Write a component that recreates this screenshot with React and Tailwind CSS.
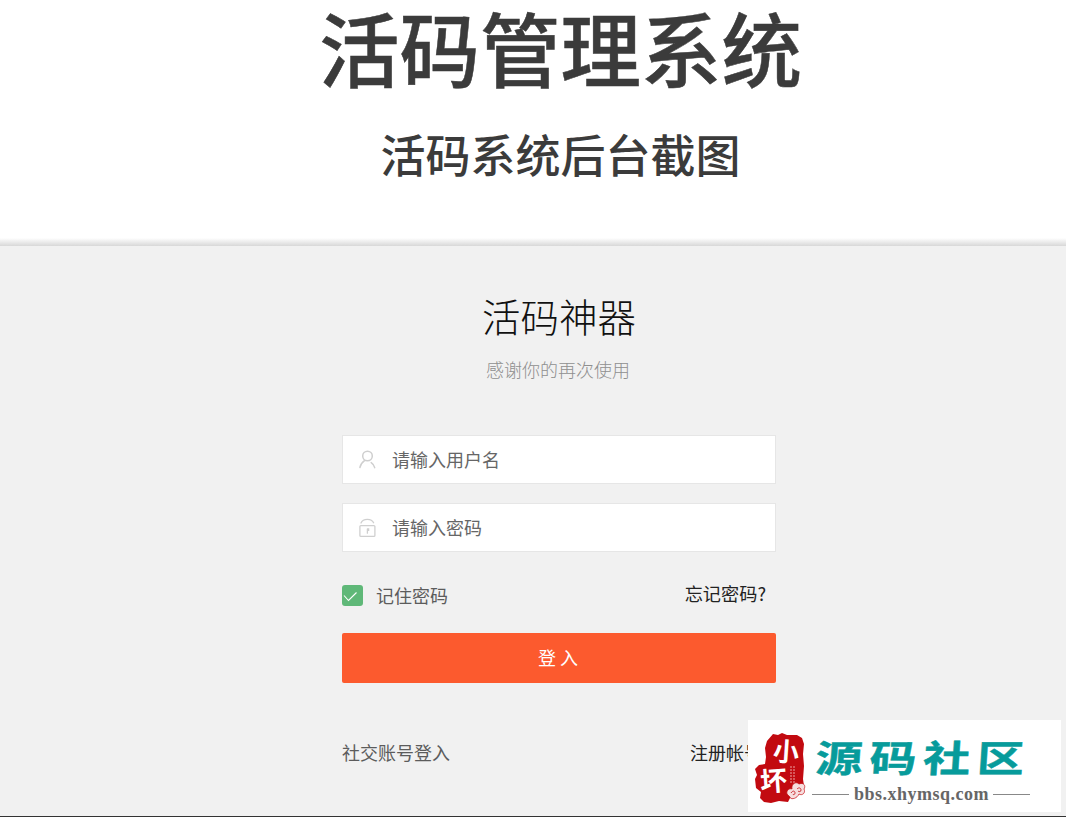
import { useState } from 'react';

function UserIcon() {
  return (
    <svg width="18" height="20" viewBox="0 0 18 20" fill="none" stroke="#cfcfcf" strokeWidth="1.5" strokeLinecap="round">
      <circle cx="8.5" cy="6" r="4.8" />
      <path d="M5.5 10.6C3.3 12.2 1.5 14.5 .9 17.5M12.2 12.6C14 13.8 15.2 15.5 15.7 17.7" />
    </svg>
  );
}

function LockIcon() {
  return (
    <svg width="18" height="20" viewBox="0 0 18 20" fill="none" stroke="#cfcfcf" strokeWidth="1.3" strokeLinecap="round">
      <rect x=".9" y="7.6" width="15" height="10.8" rx="1" />
      <path d="M2 5C3 2.6 5.4 1.3 8.4 1.3s5.2 1.2 6.2 3.4M8.4 11v4.2M8.4 11h1.2v1.4H8.4" />
    </svg>
  );
}

function Field({ icon, type, placeholder }) {
  return (
    <label className="flex h-[49px] items-center border border-[#e6e6e6] bg-white pl-4">
      {icon}
      <input
        type={type}
        placeholder={placeholder}
        className="mb-[2px] ml-[15px] min-w-0 flex-1 bg-transparent text-[18px] leading-6 outline-none placeholder:text-[#666]"
      />
    </label>
  );
}

function Seal() {
  return (
    <svg width="52" height="72" viewBox="0 0 52 72">
      <path
        d="M19 2L24 3 28 1 33 3 43 3 48 6 50 12 49 22 50 34 49 47 50 54 47 61 41 64 36 66 34 70 25 69 17 71 10 70 6 66 7 60 2 56 1 47 3 43 1 37 5 33 11 32 12 25 11 16 13 9Z"
        fill="#c20a10"
      />
      <text x="19" y="29" fontSize="26" fontWeight="700" fill="#fff" transform="rotate(4 30 20)">小</text>
      <text x="6" y="59" fontSize="27" fontWeight="700" fill="#fff" transform="rotate(-4 18 50)">坏</text>
      <path d="M37 34v17M40 34v17" stroke="#e58a8a" strokeWidth="1.2" strokeDasharray="2 1" />
      <path
        d="M33 62C32 58 36 56 38 57C37 52 42 49 45 52C50 50 52 54 50 57C52 61 48 64 45 62C43 67 36 68 36 65Z"
        fill="#f7dede"
        stroke="#c20a10"
        strokeWidth=".7"
      />
      <path d="M37 61c2-3 4-2 4 0s-2 2-2 1M43 57c2-2 4-1 4 1s-2 2-3 1" fill="none" stroke="#c20a10" strokeWidth=".8" />
    </svg>
  );
}

function Watermark() {
  return (
    <div className="absolute top-[720px] left-[748px] flex h-[92px] w-[313px] bg-white pt-[12px] pl-[6px]">
      <Seal />
      <div className="ml-[6px] w-[218px]">
        <div className="h-[50px] w-[174px] origin-left scale-x-[1.27] -skew-x-3 pl-[3px] text-[37px] leading-[48px] font-bold tracking-[5.4px] whitespace-nowrap text-[#079b9b] [-webkit-text-stroke:0.5px_#079b9b]">
          源码社区
        </div>
        <div className="flex h-6 items-center text-[#666]">
          <span className="h-px w-[37px] bg-[#888]" />
          <span className="w-[144px] pl-px text-center font-['Liberation_Serif'] text-[18px] leading-6 font-bold tracking-[0.5px]">
            bbs.xhymsq.com
          </span>
          <span className="h-px w-[37px] bg-[#888]" />
        </div>
      </div>
    </div>
  );
}

export default function App() {
  const [remember, setRemember] = useState(true);

  return (
    <div className="relative h-[817px] w-[1066px] overflow-hidden bg-white font-['Noto_Sans_CJK_SC',sans-serif]">
      <header className="flex h-[238px] flex-col items-center pt-[6px] pl-[55px] text-[#3b3b3b]">
        <h1 className="text-[80.5px] leading-[80px] font-medium [-webkit-text-stroke:0.5px_#3b3b3b]">活码管理系统</h1>
        <h2 className="mt-[45px] text-[45px] leading-[46px] font-medium">活码系统后台截图</h2>
      </header>
      <div className="h-2 bg-linear-to-b from-white to-[#d8d8d8]" />

      <main className="h-[571px] border-b border-[#333] bg-[#f1f1f1] pt-[45px] pl-[342px]">
        <div className="w-[434px]">
          <h3 className="text-center text-[38.5px] leading-[48px] font-light text-[#111]">活码神器</h3>
          <p className="mt-[18px] pr-[2px] text-center text-[18px] leading-6 font-light text-[#8f8f8f]">
            感谢你的再次使用
          </p>

          <form className="mt-[54px]" onSubmit={(e) => e.preventDefault()}>
            <div className="space-y-[19px]">
              <Field icon={<UserIcon />} type="text" placeholder="请输入用户名" />
              <Field icon={<LockIcon />} type="password" placeholder="请输入密码" />
            </div>
            <div className="mt-[33px] flex h-[23px] items-start justify-between pr-[9px] text-[18px] leading-[22px]">
              <label className="flex text-[#5c5c5c]">
                <input
                  type="checkbox"
                  className="sr-only"
                  checked={remember}
                  onChange={() => setRemember(!remember)}
                />
                <span className="flex size-[21px] items-center rounded-[3px] bg-[#5fb878]">
                  {remember && (
                    <svg width="17" height="14" viewBox="0 0 17 14" fill="none" stroke="#fff" strokeWidth="1.1">
                      <path d="M2 6.5L6.5 11.5L14.5 3.5" />
                    </svg>
                  )}
                </span>
                <span className="-mt-px ml-[13px]">记住密码</span>
              </label>
              <a className="-mt-[3px] mr-px text-[18.2px] text-[#222]">忘记密码?</a>
            </div>
            <button className="mt-[25px] h-[50px] w-full rounded-[2px] bg-[#fc5a2e] pr-[2px] pb-[2px] text-[18px] leading-[48px] text-white">
              登 入
            </button>
          </form>

          <div className="mt-[57px] flex justify-between text-[18px] leading-6">
            <span className="text-[#5c5c5c]">社交账号登入</span>
            <a className="mr-[14px] text-[#222]">注册帐号</a>
          </div>
        </div>
      </main>

      <Watermark />
    </div>
  );
}
